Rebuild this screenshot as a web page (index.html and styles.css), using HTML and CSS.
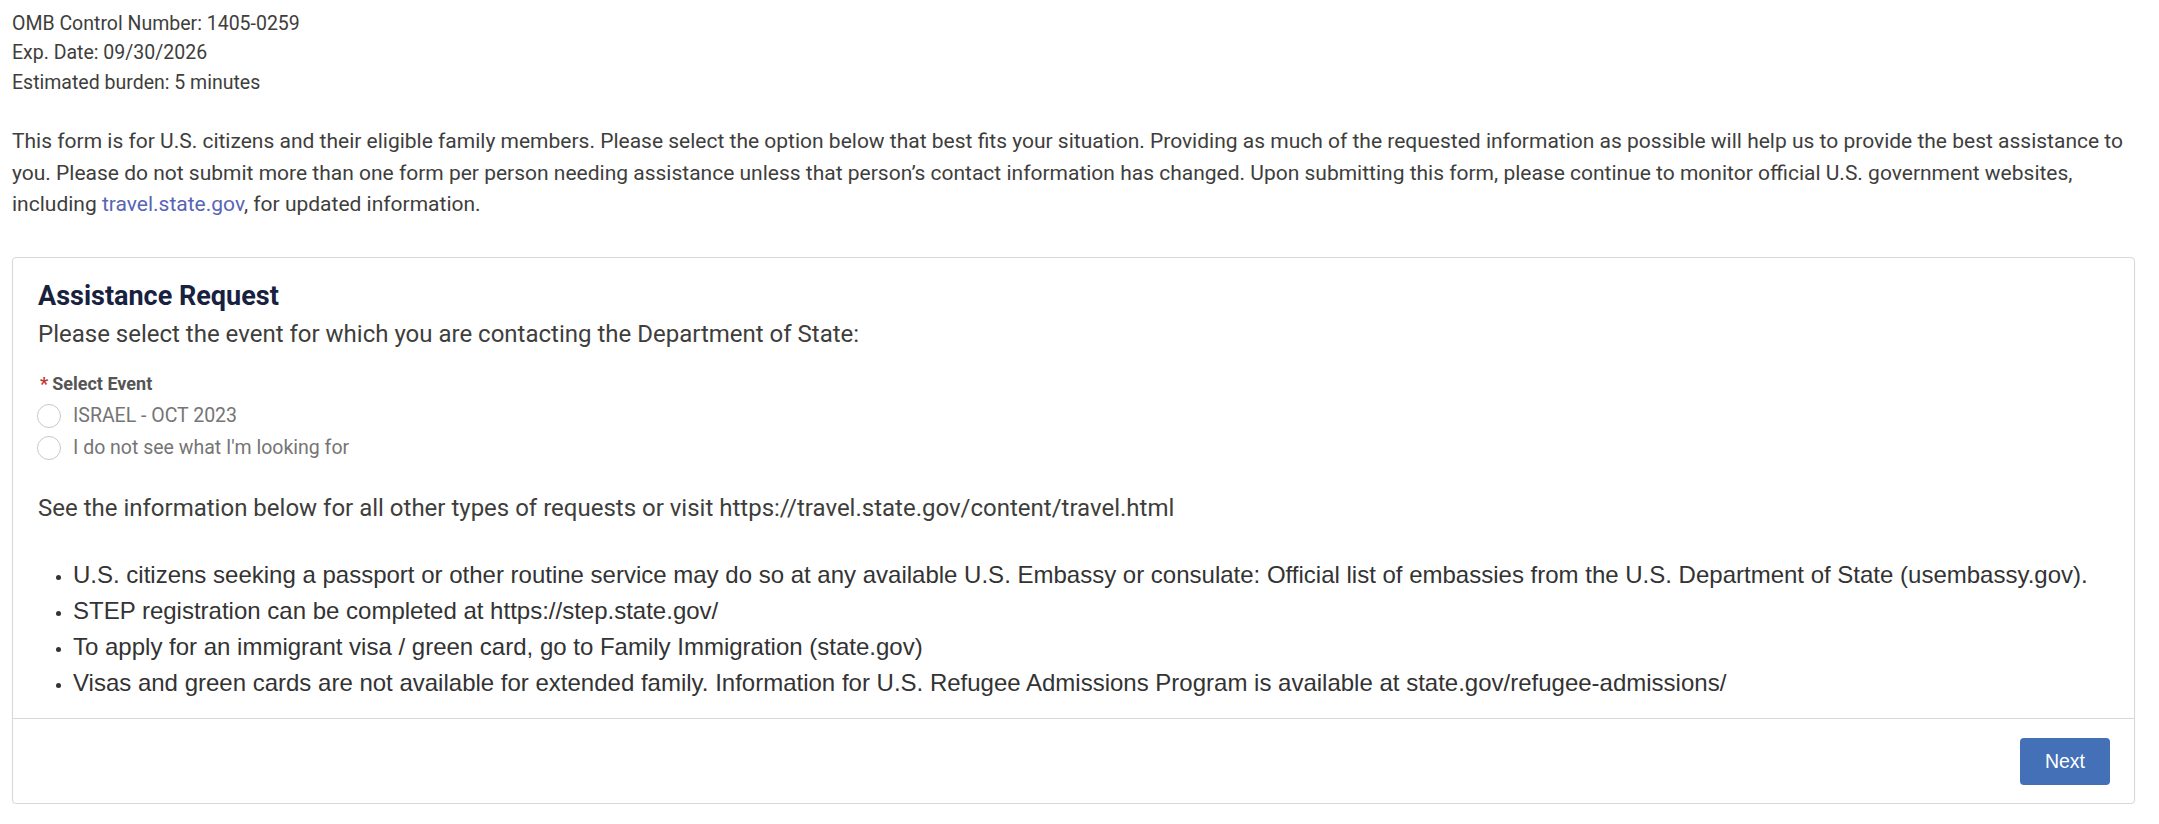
FILE: index.html
```html
<!DOCTYPE html>
<html lang="en">
<head>
    <meta charset="UTF-8">
    <meta name="viewport" content="width=device-width, initial-scale=1.0">
    <title>Assistance Request</title>
    <link rel="stylesheet" href="styles.css">
</head>
<body>
    <div class="page">
        <div class="omb">
            OMB Control Number: 1405-0259<br>
            Exp. Date: 09/30/2026<br>
            Estimated burden: 5 minutes
        </div>

        <p class="intro-text">This form is for U.S. citizens and their eligible family members. Please select the option below that best fits your situation. Providing as much of the requested information as possible will help us to provide the best assistance to you. Please do not submit more than one form per person needing assistance unless that person’s contact information has changed. Upon submitting this form, please continue to monitor official U.S. government websites, including <a href="#">travel.state.gov</a>, for updated information.</p>

        <div class="card">
            <div class="card-body">
                <h2>Assistance Request</h2>
                <p class="lead">Please select the event for which you are contacting the Department of State:</p>

                <div class="field-label"><span class="required">*</span>Select Event</div>
                <div class="radio-list">
                    <label class="radio"><span class="radio-circle"></span>ISRAEL - OCT 2023</label>
                    <label class="radio"><span class="radio-circle"></span>I do not see what I'm looking for</label>
                </div>

                <p class="info">See the information below for all other types of requests or visit https://travel.state.gov/content/travel.html</p>

                <ul class="other-requests">
                    <li>U.S. citizens seeking a passport or other routine service may do so at any available U.S. Embassy or consulate: Official list of embassies from the U.S. Department of State (usembassy.gov).</li>
                    <li>STEP registration can be completed at https://step.state.gov/</li>
                    <li>To apply for an immigrant visa / green card, go to Family Immigration (state.gov)</li>
                    <li>Visas and green cards are not available for extended family. Information for U.S. Refugee Admissions Program is available at state.gov/refugee-admissions/</li>
                </ul>
            </div>
            <div class="card-footer">
                <button class="next-btn">Next</button>
            </div>
        </div>
    </div>
</body>
</html>
```

FILE: styles.css
```css
body {
    margin: 0;
    font-family: 'Roboto', 'Liberation Sans', sans-serif;
    color: #3e3e3c;
    background-color: #ffffff;
}

.page {
    padding: 9px 24px 0 12px;
}

.omb {
    font-size: 19.5px;
    line-height: 29.25px;
}

.intro-text {
    margin: 29.25px 0 0;
    font-size: 21px;
    line-height: 31.5px;
}

.intro-text a {
    color: #5865b5;
    text-decoration: none;
}

.card {
    margin-top: 36.5px;
    border: 1px solid #d8d8d8;
    border-radius: 4px;
    box-shadow: 0 1px 2px rgba(0, 0, 0, 0.06);
}

.card-body {
    padding: 21px 25px 17.5px;
}

h2 {
    margin: 0;
    font-size: 27px;
    line-height: 34px;
    font-weight: 700;
    color: #18223f;
}

.lead {
    margin: 6px 0 0;
    font-size: 24px;
    line-height: 31.5px;
    color: #3e3e3c;
}

.field-label {
    margin-top: 19px;
    font-size: 18px;
    line-height: 27px;
    font-weight: 700;
    color: #555555;
}

.required {
    color: #c23934;
    margin: 0 4px 0 2px;
}

.radio-list {
    margin-top: 3px;
}

.radio {
    display: flex;
    align-items: center;
    gap: 12px;
    font-size: 19.5px;
    line-height: 32px;
    color: #757575;
}

.radio-circle {
    width: 22px;
    height: 22px;
    border: 1px solid #c9c9c9;
    border-radius: 50%;
    background-color: #ffffff;
    margin-left: -1px;
}

.info {
    margin: 29.5px 0 0;
    font-size: 24px;
    line-height: 31.5px;
}

.other-requests {
    margin: 32px 0 0;
    padding-left: 35px;
    font-family: 'Liberation Sans', Arial, sans-serif;
    font-size: 24px;
    line-height: 36px;
    color: #333333;
}

.other-requests li::marker {
    font-size: 17px;
}

.card-footer {
    display: flex;
    justify-content: flex-end;
    padding: 19px 24px 18px;
    border-top: 1px solid #d8d8d8;
}

.next-btn {
    width: 90px;
    height: 47px;
    background-color: #4470b7;
    color: #ffffff;
    border: none;
    border-radius: 4px;
    font-family: 'Liberation Sans', Arial, sans-serif;
    font-size: 19.5px;
    cursor: pointer;
}
```
